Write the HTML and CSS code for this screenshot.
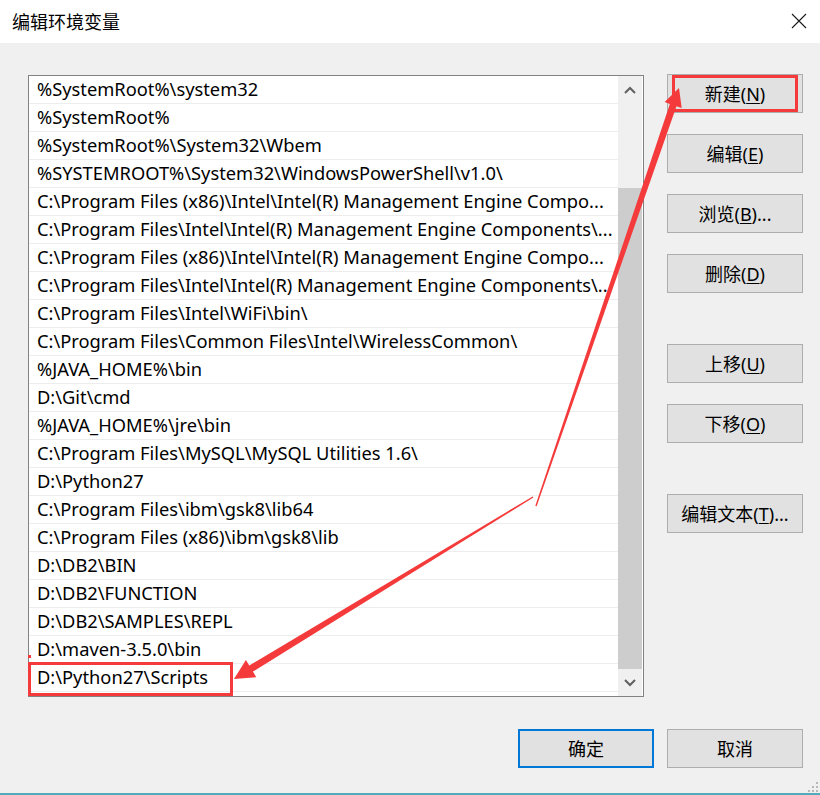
FILE: index.html
```html
<!DOCTYPE html>
<html lang="zh-CN">
<head>
<meta charset="utf-8">
<title>编辑环境变量</title>
<link rel="stylesheet" href="styles.css">
</head>
<body>
<div class="window">
  <div class="titlebar">
    <span class="title">编辑环境变量</span>
    <svg class="close" width="16" height="16" viewBox="0 0 16 16"><path d="M1 1 L15 15 M15 1 L1 15" stroke="#1a1a1a" stroke-width="1.1" fill="none"/></svg>
  </div>
  <div class="body">
    <div class="main">
      <div class="listbox">
        <ul class="rows">
          <li>%SystemRoot%\system32</li>
          <li>%SystemRoot%</li>
          <li>%SystemRoot%\System32\Wbem</li>
          <li>%SYSTEMROOT%\System32\WindowsPowerShell\v1.0\</li>
          <li>C:\Program Files (x86)\Intel\Intel(R) Management Engine Compo...</li>
          <li>C:\Program Files\Intel\Intel(R) Management Engine Components\...</li>
          <li>C:\Program Files (x86)\Intel\Intel(R) Management Engine Compo...</li>
          <li>C:\Program Files\Intel\Intel(R) Management Engine Components\..</li>
          <li>C:\Program Files\Intel\WiFi\bin\</li>
          <li>C:\Program Files\Common Files\Intel\WirelessCommon\</li>
          <li>%JAVA_HOME%\bin</li>
          <li>D:\Git\cmd</li>
          <li>%JAVA_HOME%\jre\bin</li>
          <li>C:\Program Files\MySQL\MySQL Utilities 1.6\</li>
          <li>D:\Python27</li>
          <li>C:\Program Files\ibm\gsk8\lib64</li>
          <li>C:\Program Files (x86)\ibm\gsk8\lib</li>
          <li>D:\DB2\BIN</li>
          <li>D:\DB2\FUNCTION</li>
          <li>D:\DB2\SAMPLES\REPL</li>
          <li>D:\maven-3.5.0\bin</li>
          <li>D:\Python27\Scripts</li>
        </ul>
        <div class="scrollbar">
          <div class="sb-btn sb-up"><svg width="12" height="8" viewBox="0 0 12 8"><path d="M1 7 L6 2 L11 7" stroke="#606060" stroke-width="2" fill="none"/></svg></div>
          <div class="sb-track"><div class="sb-thumb"></div></div>
          <div class="sb-btn sb-down"><svg width="12" height="8" viewBox="0 0 12 8"><path d="M1 1 L6 6 L11 1" stroke="#606060" stroke-width="2" fill="none"/></svg></div>
        </div>
      </div>
      <div class="side">
        <button class="btn">新建(<u>N</u>)</button>
        <button class="btn">编辑(<u>E</u>)</button>
        <button class="btn">浏览(<u>B</u>)...</button>
        <button class="btn">删除(<u>D</u>)</button>
        <button class="btn group">上移(<u>U</u>)</button>
        <button class="btn">下移(<u>O</u>)</button>
        <button class="btn group">编辑文本(<u>T</u>)...</button>
      </div>
    </div>
    <div class="footer">
      <button class="btn default">确定</button>
      <button class="btn">取消</button>
    </div>
  </div>
  <div class="bottomline"></div>
  <svg class="grip" width="10" height="10" viewBox="0 0 10 10">
    <rect x="8" y="0" width="2" height="2" fill="#b8b8b8"/>
    <rect x="4" y="4" width="2" height="2" fill="#b8b8b8"/>
    <rect x="8" y="4" width="2" height="2" fill="#b8b8b8"/>
    <rect x="0" y="8" width="2" height="2" fill="#b8b8b8"/>
    <rect x="4" y="8" width="2" height="2" fill="#b8b8b8"/>
    <rect x="8" y="8" width="2" height="2" fill="#b8b8b8"/>
  </svg>
  <svg class="annot" width="820" height="795" viewBox="0 0 820 795">
    <rect x="673.5" y="76.5" width="123" height="34" fill="none" stroke="#f43a3a" stroke-width="3"/>
    <rect x="29.5" y="663.5" width="202" height="31" fill="none" stroke="#f43a3a" stroke-width="3"/>
    <rect x="28" y="655" width="3" height="3" fill="#f43a3a"/>
    <polygon fill="#f43a3a" points="536.66,506.23 676.49,106.15 681.69,107.93 679,88 664.67,102.11 669.87,103.89 535.34,505.77"/>
    <polygon fill="#f43a3a" points="533.36,497.6 252.91,671.59 256.29,677.14 234,679 245.89,660.06 249.27,665.61 532.64,496.4"/>
  </svg>
</div>
</body>
</html>
```

FILE: styles.css
```css
* { box-sizing: border-box; }

body {
  margin: 0;
  background: #f0f0f0;
  font-family: "Noto Sans", "Noto Sans CJK SC", sans-serif;
  font-size: 18px;
  color: #000;
}

.window {
  position: relative;
  width: 820px;
  height: 795px;
  overflow: hidden;
  background: #f0f0f0;
}

.titlebar {
  height: 43px;
  background: #fff;
  display: flex;
  align-items: center;
  justify-content: space-between;
  padding: 0 13px 0 12px;
}

.title {
  font-family: "Noto Sans CJK SC", sans-serif;
  font-size: 18px;
  line-height: 1;
  margin-top: -2px;
}

.close {
  display: block;
  margin-top: -2px;
}

.body {
  padding: 32px 17px 0 28px;
}

.main {
  display: flex;
  align-items: flex-start;
}

.listbox {
  width: 616px;
  height: 622px;
  border: 1px solid #828282;
  background: #fff;
  display: flex;
}

.rows {
  list-style: none;
  margin: 0;
  padding: 0;
  flex: 1;
  min-width: 0;
}

.rows li {
  height: 28px;
  line-height: 26px;
  font-size: 18.3px;
  border-bottom: 1px solid #ededed;
  padding-left: 8px;
  white-space: nowrap;
  overflow: hidden;
}

.scrollbar {
  width: 24px;
  margin-right: 1px;
  background: #f0f0f0;
  display: flex;
  flex-direction: column;
}

.sb-btn {
  display: flex;
  align-items: center;
  justify-content: center;
}

.sb-up { height: 24px; padding-top: 4px; }
.sb-down { height: 27px; padding-bottom: 0; }

.sb-track {
  flex: 1;
  display: flex;
  flex-direction: column;
  padding-top: 88px;
}

.sb-thumb {
  flex: 1;
  background: #cdcdcd;
}

.side {
  margin-left: 23px;
  margin-top: -1px;
  width: 136px;
  display: flex;
  flex-direction: column;
  gap: 21px;
}

.btn {
  width: 136px;
  height: 39px;
  background: #e1e1e1;
  border: 1px solid #adadad;
  font-family: "Noto Sans", "Noto Sans CJK SC", sans-serif;
  font-size: 18px;
  color: #000;
  padding: 0;
  line-height: 1;
}

.btn u { text-underline-offset: 2px; }

.side .group { margin-top: 30px; }

.footer {
  display: flex;
  justify-content: flex-end;
  gap: 13px;
  margin-top: 32px;
}

.btn.default {
  border: 2px solid #0078d7;
}

.bottomline {
  position: absolute;
  left: 0;
  right: 0;
  bottom: 0;
  height: 2px;
  background: #52aabb;
}

.grip {
  position: absolute;
  right: 2px;
  bottom: 3px;
}

.annot {
  position: absolute;
  left: 0;
  top: 0;
  pointer-events: none;
}
```
